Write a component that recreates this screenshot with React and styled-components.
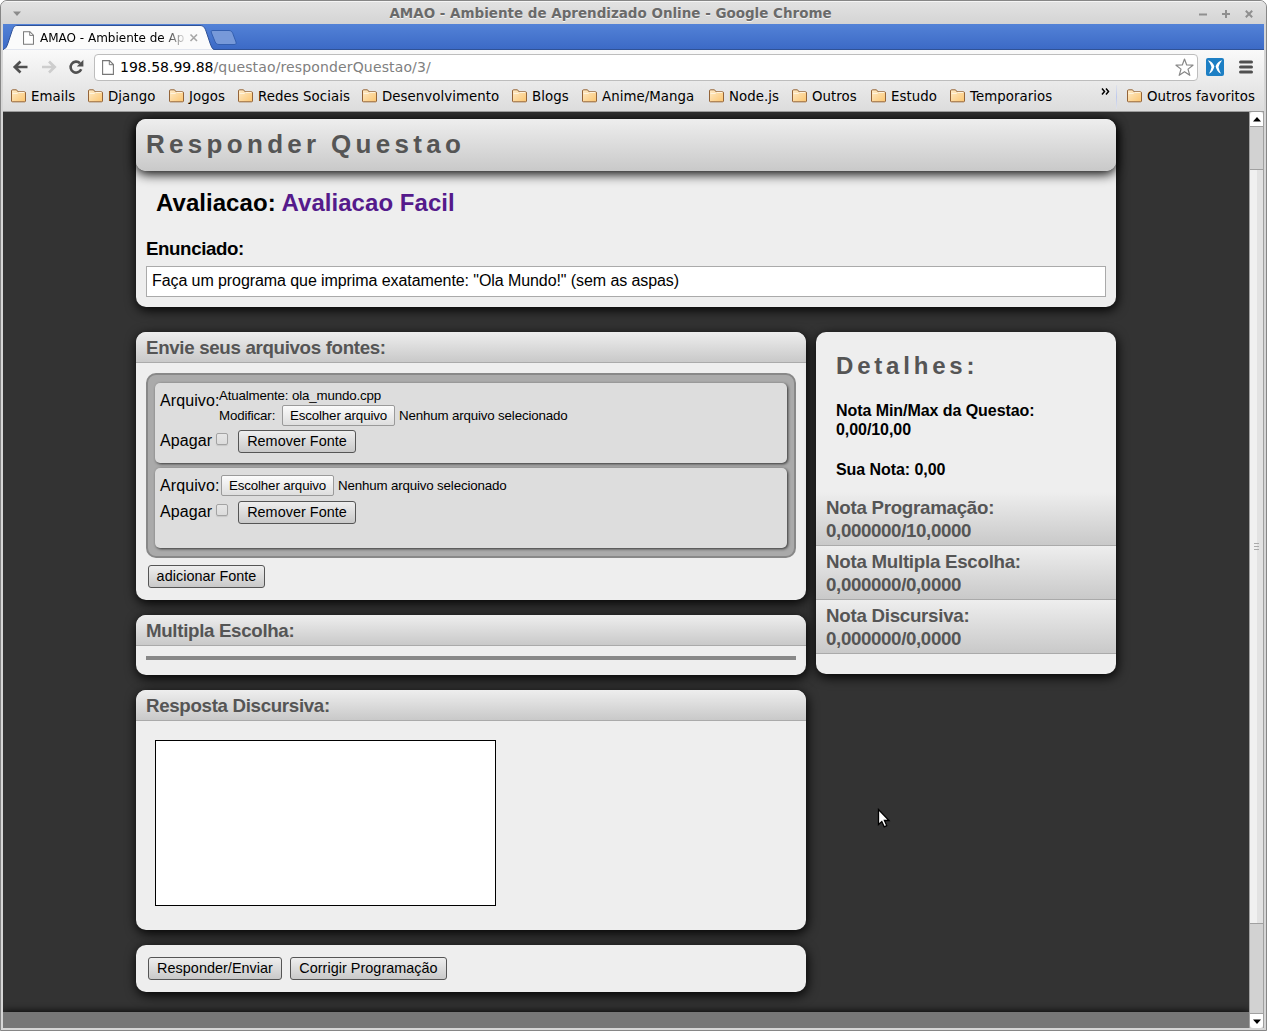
import React from "react";
import styled, { createGlobalStyle } from "styled-components";

const SANS = '"Liberation Sans", Arial, sans-serif';
const UI = '"DejaVu Sans", Verdana, sans-serif';

const GlobalStyle = createGlobalStyle`
  *, *::before, *::after { box-sizing: border-box; }
  html, body { margin: 0; padding: 0; }
  body { background: #fff; overflow: hidden; font-family: ${SANS}; }
  h1, h2, h3, p { margin: 0; }
`;

/* ---------- Window chrome ---------- */

const Window = styled.div`
  width: 1267px;
  height: 1031px;
  display: flex;
  flex-direction: column;
  background: #d6d6d6;
  border: 1px solid #868686;
  border-radius: 7px 7px 0 0;
  padding: 0 2px 2px;
  overflow: hidden;
`;

const TitleBar = styled.header`
  height: 23px;
  flex: none;
  display: flex;
  align-items: center;
  margin: 0 -2px;
  padding: 1px 12px 0 11px;
  border-top: 1px solid #f5f5f5;
  background: linear-gradient(#e2e2e2, #d4d4d4);
`;

const WindowTitle = styled.div`
  flex: 1;
  padding: 0 0 2px 1px;
  text-align: center;
  font: bold 13.47px/20px ${UI};
  color: #6a6a6a;
  text-shadow: 0 1px 0 #f4f4f4;
  white-space: nowrap;
`;

const WindowControls = styled.div`
  display: flex;
  gap: 13px;
`;

const TabStrip = styled.div`
  height: 26px;
  flex: none;
  display: flex;
  background: linear-gradient(#5382d7, #3c6ac6);
  border-bottom: 1px solid #305296;
`;

const Tab = styled.div`
  position: relative;
  width: 213px;
  height: 26px;
  display: flex;
  align-items: center;
  padding: 2px 0 0 20px;
`;

const TabShape = styled.svg`
  position: absolute;
  inset: 0;
`;

const TabLabel = styled.span`
  position: relative;
  width: 145px;
  margin-left: 6px;
  white-space: nowrap;
  font: 12px/20px ${UI};
  color: #000;
  mask-image: linear-gradient(to right, #000 84%, transparent 102%);
`;

const Layered = styled.svg`
  position: relative;
  flex: none;
`;

const CloseTab = styled(Layered)`
  margin-left: 4px;
`;

const NewTab = styled.svg`
  margin: 5px 0 0 -6px;
  position: relative;
`;

const Chrome = styled.div`
  height: 62px;
  flex: none;
  background: linear-gradient(#fafafa, #dcdcdc);
  border-bottom: 1px solid #9b9b9b;
`;

const Toolbar = styled.div`
  height: 33px;
  display: flex;
  align-items: center;
  padding: 0 9px;
`;

const AddressBar = styled.div`
  width: 1104px;
  height: 27px;
  flex: none;
  display: flex;
  align-items: center;
  margin: 2px 0 0 7px;
  padding: 0 3px 0 7px;
  background: #fff;
  border: 1px solid #bdbdbd;
  border-radius: 4px;
`;

const Url = styled.span`
  flex: 1;
  margin-left: 6px;
  padding-bottom: 2px;
  font: 14px/22px ${UI};
  letter-spacing: 0.14px;
  color: #808080;
  b { font-weight: normal; letter-spacing: 0; color: #000; }
`;

const ExtensionIcon = styled.svg`
  flex: none;
  margin-left: 8px;
`;

const MenuIcon = styled.svg`
  flex: none;
  margin: 1px 0 0 15px;
`;

const Bookmarks = styled.nav`
  height: 27px;
  display: flex;
  align-items: center;
  padding-left: 8px;
`;

const FolderIcon = styled.svg`
  flex: none;
  margin-bottom: 2px;
`;

const BookmarkItem = styled.div`
  display: flex;
  align-items: center;
  gap: 5px;
  width: ${(p) => p.$w}px;
  flex: none;
  font: 13.33px/20px ${UI};
  letter-spacing: 0.06px;
  color: #000;
  white-space: nowrap;
`;

const Overflow = styled.span`
  width: 15px;
  height: 20px;
  padding-top: 1px;
  flex: none;
  svg { display: block; }
`;

const BookmarkDivider = styled.span`
  width: 1px;
  height: 24px;
  margin-right: 10px;
  background: linear-gradient(#dfe2ea, #bcc8ee, #dfe2ea);
`;

/* ---------- Page ---------- */

const Viewport = styled.div`
  flex: 1;
  min-height: 0;
  display: flex;
  background: #333;
`;

const Page = styled.main`
  flex: 1;
  display: flex;
  flex-direction: column;
  align-items: center;
  padding-top: 7px;
  overflow: hidden;
`;

const Card = styled.section`
  width: 100%;
  height: ${(p) => p.$h}px;
  background: #eee;
  border-radius: 10px;
  box-shadow: 1px 3px 12px #000;
  overflow: ${(p) => (p.$clip ? "hidden" : "visible")};
`;

const QuestionCard = styled(Card)`
  width: 980px;
  flex: none;
`;

const PageTitle = styled.h1`
  height: 52px;
  padding-left: 10px;
  border-radius: 10px;
  background: linear-gradient(#eee, #c9c9c9);
  box-shadow: 0 3px 12px #000;
  font: bold 26px/50px ${SANS};
  letter-spacing: 4.3px;
  word-spacing: -1px;
  color: #555;
`;

const Evaluation = styled.h2`
  padding: 18px 20px 0;
  font: bold 24px/28px ${SANS};
  letter-spacing: 0.05px;
  color: #000;
  span { color: #551a8b; }
`;

const StatementLabel = styled.h3`
  padding: 21px 10px 0;
  font: bold 18.72px/22px ${SANS};
  letter-spacing: -0.4px;
`;

const Statement = styled.p`
  height: 31px;
  margin: 6px 10px 0;
  padding-left: 5px;
  border: 1px solid #aaa;
  background: #fff;
  font: 16px/27px ${SANS};
  letter-spacing: -0.08px;
`;

const Columns = styled.div`
  width: 980px;
  flex: none;
  display: flex;
  align-items: flex-start;
  gap: 10px;
  margin-top: 25px;
`;

const MainColumn = styled.div`
  width: 670px;
  display: flex;
  flex-direction: column;
  gap: 15px;
`;

const SideColumn = styled.aside`
  width: 300px;
`;

const GroupTitle = styled.h3`
  height: 31px;
  padding-left: 10px;
  border-bottom: 1px solid #aaa;
  background: linear-gradient(#eee, #c9c9c9);
  font: bold 18.72px/31px ${SANS};
  letter-spacing: -0.32px;
  color: #555;
`;

const SourceList = styled.div`
  height: 185px;
  margin: 10px 10px 0;
  padding: 8px 7px;
  display: flex;
  flex-direction: column;
  gap: 5px;
  background: #aaa;
  border: 2px solid #888;
  border-radius: 10px;
`;

const SourceItem = styled.div`
  height: 80px;
  padding: ${(p) => p.$top}px 5px 0;
  background: #ddd;
  border-radius: 5px;
  box-shadow: 1px 1px 3px #333;
  font: 16px/18px ${SANS};
  letter-spacing: 0.1px;
`;

const FieldRow = styled.div`
  display: flex;
  align-items: flex-start;
  margin-top: ${(p) => p.$mt || 0}px;
`;

const FieldLabel = styled.label`
  width: ${(p) => p.$w}px;
  padding-top: ${(p) => p.$pt || 0}px;
  line-height: ${(p) => p.$lh || 18}px;
  flex: none;
  white-space: nowrap;
`;

const FileField = styled.div`
  margin-left: ${(p) => p.$ml || 0}px;
  font: 13.33px/19px ${SANS};
  letter-spacing: -0.16px;
`;

const FilePicker = styled.div`
  display: flex;
  height: 21px;
  line-height: 21px;
  gap: 4px;
  white-space: nowrap;
`;

const ModifyLabel = styled.span`
  width: 59px;
`;

const FileButton = styled.button`
  width: 113px;
  height: 21px;
  padding: 0;
  border: 1px solid #9a9a9a;
  border-radius: 2px;
  background: linear-gradient(#fbfbfb, #dedede);
  font: 13.33px/19px ${SANS};
  letter-spacing: -0.13px;
  color: #000;
`;

const Checkbox = styled.input.attrs({ type: "checkbox" })`
  appearance: none;
  width: 12px;
  height: 12px;
  margin: 3px 10px 0 0;
  border: 1px solid #a3a3a3;
  border-radius: 2px;
  background: linear-gradient(#e6e6e6, #dcdcdc);
  box-shadow: 0 1px 1px rgba(0, 0, 0, 0.1);
`;

const Button = styled.button`
  width: ${(p) => p.$w}px;
  height: 23px;
  padding: 0;
  border: 1px solid #555;
  border-radius: 3px;
  background: linear-gradient(#eee, #c9c9c9);
  font: 14.4px/21px ${SANS};
  letter-spacing: 0.04px;
  color: #000;
  white-space: nowrap;
`;

const Actions = styled.div`
  display: flex;
  gap: 8px;
  padding: ${(p) => p.$top}px 12px 0;
`;

const EmptyChoices = styled.div`
  height: 4px;
  margin: 10px 10px 0;
  background: #888;
`;

const Answer = styled.textarea`
  display: block;
  width: 341px;
  height: 166px;
  margin: 19px 0 0 19px;
  border: 1px solid #000;
  background: #fff;
  resize: none;
  outline: none;
`;

const DetailsTitle = styled.h2`
  padding: 20px 20px 0;
  font: bold 24px/28px ${SANS};
  letter-spacing: 3.8px;
  color: #555;
`;

const Detail = styled.p`
  padding: ${(p) => p.$top}px 20px 0;
  font: bold 16px/19px ${SANS};
  letter-spacing: -0.06px;
`;

const Scores = styled.div`
  margin-top: 13px;
`;

const Score = styled.h3`
  height: 54px;
  padding: 4px 10px 0;
  border-bottom: 1px solid #aaa;
  background: linear-gradient(#eee, #c9c9c9);
  font: bold 18.72px/23px ${SANS};
  letter-spacing: -0.26px;
  color: #555;
  span { letter-spacing: -0.36px; }
`;

const Footer = styled.footer`
  width: 100%;
  flex: 1;
  margin-top: 20px;
  background: #777;
  box-shadow: 0 0 8px #000;
`;

const Scrollbar = styled.div`
  width: 15px;
  display: flex;
  flex-direction: column;
  background: #d2d2d2;
  border: solid #a0a0a0;
  border-width: 0 1px;
`;

const ScrollButton = styled.div`
  height: 15px;
  flex: none;
  display: grid;
  place-items: center;
  background: #fff;
  border-radius: ${(p) => (p.$down ? "0 0 3px 3px" : "3px 3px 0 0")};
  border-${(p) => (p.$down ? "top" : "bottom")}: 1px solid #a0a0a0;
`;

const ScrollThumb = styled.div`
  height: 755px;
  margin-top: 42px;
  display: grid;
  place-items: center;
  border: solid #a0a0a0;
  border-width: 1px 0;
  background: linear-gradient(to right, #f0f0f0 55%, #e2e2e2 55%);
`;

const ScrollGap = styled.div`
  flex: 1;
`;

const Pointer = styled.svg`
  position: absolute;
  left: 877px;
  top: 808px;
`;

/* ---------- Icons ---------- */

const Folder = () => (
  <FolderIcon width="15" height="14" viewBox="0 0 15 14">
    <defs>
      <linearGradient id="folder" x1="0" y1="0" x2="1" y2="1">
        <stop offset="0" stopColor="#ffeccb" />
        <stop offset="1" stopColor="#fbc56f" />
      </linearGradient>
    </defs>
    <path d="M.5 12V2Q.5.8 1.600.8H5.500L7 2.800H13.500Q14.500 2.800 14.500 4V12Q14.500 12.800 13.600 12.800H1.400Q.5 12.800.5 12Z" fill="url(#folder)" stroke="#946438" />
    <path d="M1.500 4.500H6L7.500 3.500H13.500" fill="none" stroke="#fff3dc" />
  </FolderIcon>
);

const PageIcon = ({ w = 12, h = 15 }) => (
  <Layered width={w} height={h} viewBox="0 0 12 15">
    <path d="M.6.6H7.500L11.400 4.500V14.400H.6Z" fill="#fff" stroke="#777" strokeWidth="1.100" />
    <path d="M7.300.8V4.700H11.200" fill="none" stroke="#777" />
  </Layered>
);

const Arrow = ({ color, flip }) => (
  <svg width="28" height="18" viewBox="0 0 28 18">
    <g transform={flip ? "translate(17.500 0) scale(-1 1)" : ""}>
      <path d="M8.500 3.500L2.800 9L8.500 14.500M3 9H15.500" fill="none" stroke={color} strokeWidth="2.700" />
    </g>
  </svg>
);

const Reload = () => (
  <svg width="19" height="18" viewBox="1 0 19 18">
    <path d="M14.200 11.300A5.500 5.500 0 1 1 13 5.200" fill="none" stroke="#505050" strokeWidth="2.600" />
    <path d="M16.400 1.800V8.400H9.800Z" fill="#505050" />
  </svg>
);

const bookmarks = [
  ["Emails", 77],
  ["Django", 81],
  ["Jogos", 69],
  ["Redes Sociais", 124],
  ["Desenvolvimento", 150],
  ["Blogs", 70],
  ["Anime/Manga", 127],
  ["Node.js", 83],
  ["Outros", 79],
  ["Estudo", 79],
  ["Temporarios", 151],
];

const scores = [
  ["Nota Programação:", "0,000000/10,0000"],
  ["Nota Multipla Escolha:", "0,000000/0,0000"],
  ["Nota Discursiva:", "0,000000/0,0000"],
];

const Picker = () => (
  <>
    <FileButton>Escolher arquivo</FileButton>
    <span>Nenhum arquivo selecionado</span>
  </>
);

const DeleteRow = ({ mt }) => (
  <FieldRow $mt={mt}>
    <FieldLabel $w={56} $lh={21}>Apagar</FieldLabel>
    <Checkbox />
    <Button $w={118}>Remover Fonte</Button>
  </FieldRow>
);

export default function App() {
  return (
    <>
      <GlobalStyle />
      <Window>
        <TitleBar>
          <svg width="10" height="6" viewBox="0 0 10 6">
            <path d="M1 .5H9L5 5Z" fill="#8b8b8b" />
          </svg>
          <WindowTitle>AMAO - Ambiente de Aprendizado Online - Google Chrome</WindowTitle>
          <WindowControls>
            <svg width="10" height="10"><path d="M1 5.500H9" stroke="#8f8f8f" strokeWidth="2" /></svg>
            <svg width="10" height="10"><path d="M1 5H9M5 1V9" stroke="#8f8f8f" strokeWidth="2" /></svg>
            <svg width="10" height="10"><path d="M1.800 1.800L8.200 8.200M8.200 1.800L1.800 8.200" stroke="#8f8f8f" strokeWidth="2" /></svg>
          </WindowControls>
        </TitleBar>

        <TabStrip>
          <Tab>
            <TabShape width="213" height="26" viewBox="0 0 213 26">
              <path d="M0 25.500C3 25 4 22 5 19L9 7C10.500 3 11.500 1.500 14 1.500H197C200 1.500 201.500 3 203 7L207 19C208.500 23 209 25 212 26H0Z" fill="#fbfbfb" stroke="#305296" />
              <path d="M1 26H210" stroke="#fafafa" strokeWidth="1.500" />
            </TabShape>
            <PageIcon w={11} h={14} />
            <TabLabel>AMAO - Ambiente de Ap</TabLabel>
            <CloseTab width="10" height="10">
              <path d="M1.500 1.500L8 8M8 1.500L1.500 8" stroke="#a6a6a6" strokeWidth="1.600" />
            </CloseTab>
          </Tab>
          <NewTab width="28" height="17" viewBox="0 0 28 17">
            <path d="M3 1.500H19C21 1.500 22 2.500 22.800 4.500L26 13C26.500 15 26 15.500 24 15.500H9C7 15.500 6 14.500 5.200 13L1.500 4C.8 2.200 1 1.500 3 1.500Z" fill="#7799d9" stroke="#345faf" />
          </NewTab>
        </TabStrip>

        <Chrome>
          <Toolbar>
            <Arrow color="#505050" />
            <Arrow color="#cdcdcd" flip />
            <Reload />
            <AddressBar>
              <PageIcon />
              <Url><b>198.58.99.88</b>/questao/responderQuestao/3/</Url>
              <svg width="19" height="19" viewBox="0 0 19 19">
                <path d="M9.500 1L11.700 7L18 7.200L13 11.100L14.800 17.300L9.500 13.700L4.200 17.300L6 11.100L1 7.200L7.300 7Z" fill="#fff" stroke="#888" strokeWidth="1.200" strokeLinejoin="round" />
              </svg>
            </AddressBar>
            <ExtensionIcon width="18" height="18" viewBox="0 0 18 18">
              <rect width="18" height="18" rx="2" fill="#1d7fc4" />
              <path d="M1.800 2.200C4.800 3 7 4.800 8.400 8.200C7.800 11.500 6 14.200 3 15.800C4.200 13.500 5 11.500 5.500 9.300C5 6.800 3.600 4.600 1.800 2.200ZM16.200 2.200C13.200 3 11 4.800 9.600 8.200C10.200 11.500 12 14.200 15 15.800C13.800 13.500 13 11.500 12.500 9.300C13 6.800 14.400 4.600 16.200 2.200Z" fill="#fff" />
            </ExtensionIcon>
            <MenuIcon width="14" height="14" viewBox="0 0 14 14">
              <path d="M1.500 2H12.500M1.500 7H12.500M1.500 12H12.500" stroke="#505050" strokeWidth="3" strokeLinecap="round" />
            </MenuIcon>
          </Toolbar>
          <Bookmarks>
            {bookmarks.map(([name, w]) => (
              <BookmarkItem key={name} $w={w}><Folder />{name}</BookmarkItem>
            ))}
            <Overflow>
              <svg width="9" height="7" viewBox="0 0 9 7">
                <path d="M1 .5L3.500 3.500L1 6.500M5 .5L7.500 3.500L5 6.500" fill="none" stroke="#000" strokeWidth="1.500" />
              </svg>
            </Overflow>
            <BookmarkDivider />
            <BookmarkItem $w={134}><Folder />Outros favoritos</BookmarkItem>
          </Bookmarks>
        </Chrome>

        <Viewport>
          <Page>
            <QuestionCard $h={188}>
              <PageTitle>Responder Questao</PageTitle>
              <Evaluation>Avaliacao: <span>Avaliacao Facil</span></Evaluation>
              <StatementLabel>Enunciado:</StatementLabel>
              <Statement>Faça um programa que imprima exatamente: "Ola Mundo!" (sem as aspas)</Statement>
            </QuestionCard>

            <Columns>
              <MainColumn>
                <Card $h={268} $clip>
                  <GroupTitle>Envie seus arquivos fontes:</GroupTitle>
                  <SourceList>
                    <SourceItem $top={3}>
                      <FieldRow>
                        <FieldLabel $w={59} $pt={6}>Arquivo:</FieldLabel>
                        <FileField>
                          <div>Atualmente: ola_mundo.cpp</div>
                          <FilePicker><ModifyLabel>Modificar:</ModifyLabel><Picker /></FilePicker>
                        </FileField>
                      </FieldRow>
                      <DeleteRow mt={4} />
                    </SourceItem>
                    <SourceItem $top={7}>
                      <FieldRow>
                        <FieldLabel $w={59} $lh={21}>Arquivo:</FieldLabel>
                        <FileField $ml={2}>
                          <FilePicker><Picker /></FilePicker>
                        </FileField>
                      </FieldRow>
                      <DeleteRow mt={5} />
                    </SourceItem>
                  </SourceList>
                  <Actions $top={7}><Button $w={117}>adicionar Fonte</Button></Actions>
                </Card>

                <Card $h={60} $clip>
                  <GroupTitle>Multipla Escolha:</GroupTitle>
                  <EmptyChoices />
                </Card>

                <Card $h={240} $clip>
                  <GroupTitle>Resposta Discursiva:</GroupTitle>
                  <Answer />
                </Card>

                <Card $h={47}>
                  <Actions $top={12}>
                    <Button $w={134}>Responder/Enviar</Button>
                    <Button $w={157}>Corrigir Programação</Button>
                  </Actions>
                </Card>
              </MainColumn>

              <SideColumn>
                <Card $h={342} $clip>
                  <DetailsTitle>Detalhes:</DetailsTitle>
                  <Detail $top={21}>Nota Min/Max da Questao:<br />0,00/10,00</Detail>
                  <Detail $top={21}>Sua Nota: 0,00</Detail>
                  <Scores>
                    {scores.map(([label, value]) => (
                      <Score key={label}>{label}<br /><span>{value}</span></Score>
                    ))}
                  </Scores>
                </Card>
              </SideColumn>
            </Columns>

            <Footer />
          </Page>

          <Scrollbar>
            <ScrollButton>
              <svg width="8" height="5"><path d="M4 0L8 4.500H0Z" fill="#000" /></svg>
            </ScrollButton>
            <ScrollThumb>
              <svg width="5" height="7"><path d="M0 .5H5M0 3.500H5M0 6.500H5" stroke="#aaa" /></svg>
            </ScrollThumb>
            <ScrollGap />
            <ScrollButton $down>
              <svg width="8" height="5"><path d="M0 .5H8L4 5Z" fill="#000" /></svg>
            </ScrollButton>
          </Scrollbar>
        </Viewport>
      </Window>
      <Pointer width="14" height="21" viewBox="0 0 14 21">
        <path d="M1.500 1.500V16.500L4.800 13.500L7.200 18.800L9.700 17.600L7.400 12.500H12Z" fill="#fff" stroke="#000" strokeWidth="1.300" />
      </Pointer>
    </>
  );
}
